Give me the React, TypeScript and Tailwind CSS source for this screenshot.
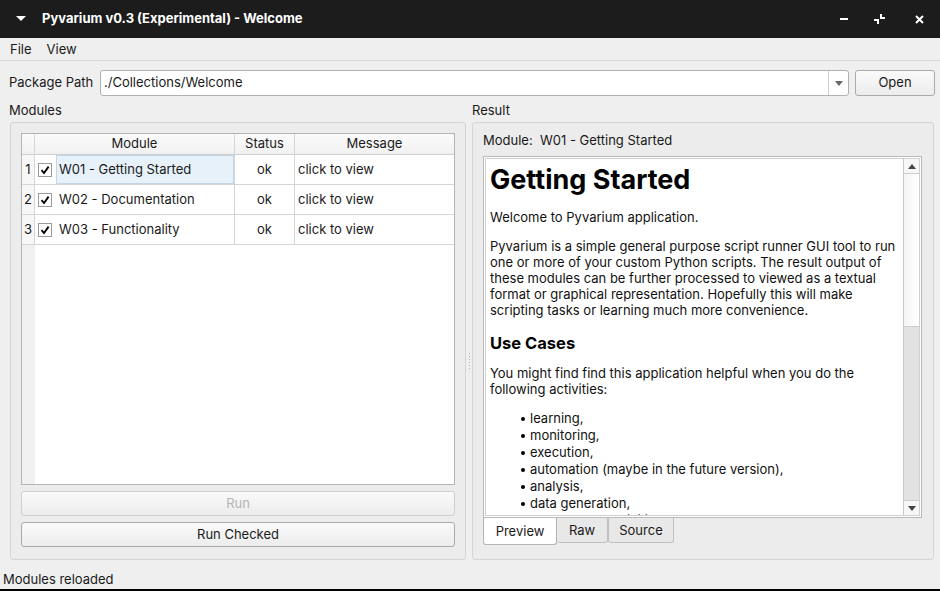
import React from 'react';

const rows = [
  { n: 1, name: 'W01 - Getting Started', status: 'ok', msg: 'click to view', current: true },
  { n: 2, name: 'W02 - Documentation', status: 'ok', msg: 'click to view', current: false },
  { n: 3, name: 'W03 - Functionality', status: 'ok', msg: 'click to view', current: false },
];

const uses = [
  'learning,',
  'monitoring,',
  'execution,',
  'automation (maybe in the future version),',
  'analysis,',
  'data generation,',
  'or any other activities.',
];

function Check() {
  return (
    <div className="w-[14px] h-[14px] bg-white border border-[#9a9a9a] flex items-center justify-center">
      <svg width="10" height="10" viewBox="0 0 10 10">
        <path d="M1.5 5.2 L4 8 L8.6 1.6" stroke="#000" strokeWidth="1.8" fill="none" />
      </svg>
    </div>
  );
}

function TitleBar() {
  return (
    <div className="h-[38px] bg-[#1c1c1c] flex items-center text-white shrink-0">
      <div className="w-[42px] flex justify-center">
        <svg width="10" height="6" viewBox="0 0 10 6">
          <path d="M0 0 H10 L5 5 Z" fill="#fff" />
        </svg>
      </div>
      <div className="text-[13px] font-bold flex-1">Pyvarium v0.3 (Experimental) - Welcome</div>
      <div className="flex items-center">
        <div className="w-[36px] flex justify-center">
          <div className="w-[8px] h-[2px] bg-white"></div>
        </div>
        <div className="w-[36px] flex justify-center">
          <svg width="14" height="14" viewBox="0 0 14 14">
            <path d="M8 2 V6 H12" stroke="#fff" strokeWidth="2" fill="none" />
            <path d="M1 8 H5 V12" stroke="#fff" strokeWidth="2" fill="none" />
          </svg>
        </div>
        <div className="w-[42px] flex justify-center">
          <svg width="9" height="9" viewBox="0 0 9 9">
            <path d="M1 1 L8 8 M8 1 L1 8" stroke="#fff" strokeWidth="2" />
          </svg>
        </div>
      </div>
    </div>
  );
}

function ModulesTable() {
  return (
    <div className="flex-1 bg-white border border-[#b4b4b4] flex flex-col text-[13px] text-[#1a1a1a]">
      <div className="h-[21px] flex border-b border-[#cfcfcf] bg-gradient-to-b from-[#fbfbfb] to-[#f1f1f1] shrink-0">
        <div className="w-[13px] border-r border-[#d6d6d6]"></div>
        <div className="w-[200px] border-r border-[#d6d6d6] flex items-center justify-center">Module</div>
        <div className="w-[60px] border-r border-[#d6d6d6] flex items-center justify-center">Status</div>
        <div className="flex-1 flex items-center justify-center">Message</div>
      </div>
      <div className="flex flex-1">
        <div className="w-[13px] bg-[#f0f0f0] flex flex-col">
          {rows.map((r) => (
            <div key={r.n} className="h-[30px] border-b border-r border-[#d6d6d6] flex items-center justify-center bg-[#f7f7f7]">
              {r.n}
            </div>
          ))}
        </div>
        <div className="flex-1 flex flex-col">
          {rows.map((r) => (
            <div key={r.n} className="h-[30px] flex border-b border-[#d6d6d6]">
              <div className="w-[200px] border-r border-[#d6d6d6] flex items-center pl-[3px]">
                <Check />
                <div
                  className={
                    r.current
                      ? 'ml-[4px] flex-1 h-full flex items-center pl-[2px] bg-[#e6f1fa] border border-[#c4d7e8]'
                      : 'ml-[4px] flex-1 h-full flex items-center pl-[3px]'
                  }
                >
                  {r.name}
                </div>
              </div>
              <div className="w-[60px] border-r border-[#d6d6d6] flex items-center justify-center">{r.status}</div>
              <div className="flex-1 flex items-center pl-[3px]">{r.msg}</div>
            </div>
          ))}
        </div>
      </div>
    </div>
  );
}

function Btn({ children, disabled }: { children: React.ReactNode; disabled?: boolean }) {
  return (
    <div
      className={
        'h-[25px] rounded-[3px] border flex items-center justify-center text-[13px] bg-gradient-to-b from-[#fafafa] to-[#ececec] ' +
        (disabled ? 'border-[#cfcfcf] text-[#b4b4b4]' : 'border-[#aaaaaa] text-[#1a1a1a]')
      }
    >
      {children}
    </div>
  );
}

function ScrollBar() {
  return (
    <div className="w-[16px] border-l border-[#c8c8c8] flex flex-col bg-[#e2e2e2]">
      <div className="h-[15px] bg-[#f7f7f7] border-b border-[#cdcdcd] flex items-center justify-center">
        <svg width="8" height="5" viewBox="0 0 8 5">
          <path d="M0 5 L4 0 L8 5 Z" fill="#444" />
        </svg>
      </div>
      <div className="h-[153px] bg-gradient-to-r from-[#f4f4f4] to-[#ffffff] border-b border-[#cdcdcd]"></div>
      <div className="flex-1"></div>
      <div className="h-[15px] bg-[#f7f7f7] border-t border-[#cdcdcd] flex items-center justify-center">
        <svg width="8" height="5" viewBox="0 0 8 5">
          <path d="M0 0 L8 0 L4 5 Z" fill="#444" />
        </svg>
      </div>
    </div>
  );
}

function Preview() {
  return (
    <div className="flex-1 min-h-0 bg-white border border-[#b9b9b9] p-px">
      <div className="h-full border border-[#d0d0d0] flex">
        <div className="flex-1 overflow-hidden pl-[4px] text-[13px] leading-[16px] text-[#111]">
          <h1 className="text-[27px] leading-[32px] font-bold mt-[5px] mb-[13px] text-black">Getting Started</h1>
          <p className="mb-[13px]">Welcome to Pyvarium application.</p>
          <p className="mb-[14px]">
            Pyvarium is a simple general purpose script runner GUI tool to run one or more of your custom Python
            scripts. The result output of these modules can be further processed to viewed as a textual format or
            graphical representation. Hopefully this will make scripting tasks or learning much more convenience.
          </p>
          <h2 className="text-[16.5px] leading-[22px] font-bold mb-[11px] text-black">Use Cases</h2>
          <p className="mb-[13px]">
            You might find find this application helpful when you do the following activities:
          </p>
          <ul className="pl-[31px] leading-[17px]">
            {uses.map((u) => (
              <li key={u} className="flex items-center">
                <span className="w-[4px] h-[4px] rounded-full bg-black mr-[5px]"></span>
                {u}
              </li>
            ))}
          </ul>
        </div>
        <ScrollBar />
      </div>
    </div>
  );
}

function Tabs() {
  return (
    <div className="flex text-[13px] text-[#1a1a1a] shrink-0">
      <div className="w-[74px] h-[27px] bg-white border border-t-0 border-[#b4b4b4] rounded-b-[3px] flex items-center justify-center pt-[2px]">
        Preview
      </div>
      <div className="w-[51px] h-[25px] bg-[#e8e8e8] border border-t-0 border-l-0 border-[#c0c0c0] rounded-b-[3px] flex items-center justify-center pt-[2px]">
        Raw
      </div>
      <div className="w-[66px] h-[25px] bg-[#e8e8e8] border border-t-0 border-[#c0c0c0] rounded-b-[3px] flex items-center justify-center pt-[2px]">
        Source
      </div>
    </div>
  );
}

export default function App() {
  return (
    <div className="w-[940px] h-[591px] bg-[#efefef] flex flex-col font-['Inter',sans-serif] text-[13px] text-[#1a1a1a] overflow-hidden">
      <TitleBar />
      <div className="h-[23px] flex items-center gap-[15px] px-[10px] pt-[1px] border-b border-[#d9d9d9] shrink-0">
        <span>File</span>
        <span>View</span>
      </div>
      <div className="flex items-center mt-[9px] h-[26px] pl-[9px] pr-[5px] shrink-0">
        <span className="w-[91px]">Package Path</span>
        <div className="flex-1 h-[26px] bg-white border border-[#b0b0b0] rounded-[3px] flex">
          <div className="flex-1 flex items-center pl-[3px]">./Collections/Welcome</div>
          <div className="w-[20px] border-l border-[#cfcfcf] flex items-center justify-center">
            <svg width="8" height="5" viewBox="0 0 8 5">
              <path d="M0 0 L8 0 L4 5 Z" fill="#666" />
            </svg>
          </div>
        </div>
        <div className="w-[80px] h-[26px] ml-[6px] rounded-[3px] border border-[#aaaaaa] bg-gradient-to-b from-[#fafafa] to-[#ececec] flex items-center justify-center">
          Open
        </div>
      </div>
      <div className="flex flex-1 min-h-0 pr-[6px] mt-[5px]">
        <div className="w-[466px] pl-[9px] flex flex-col">
          <div className="h-[19px] flex items-center">Modules</div>
          <div className="ml-px flex-1 min-h-0 mt-[2px] border border-[#d4d4d4] rounded-[3px] bg-[#ececec] pt-[10px] px-[10px] pb-[12px] flex flex-col">
            <ModulesTable />
            <div className="mt-[6px]">
              <Btn disabled>Run</Btn>
            </div>
            <div className="mt-[6px]">
              <Btn>Run Checked</Btn>
            </div>
          </div>
        </div>
        <div className="w-[6px] flex items-center justify-center">
          <div className="flex flex-col gap-[2px] mt-[60px]">
            {[0, 1, 2, 3, 4, 5].map((i) => (
              <div key={i} className="w-px h-px bg-[#b0b0b0]"></div>
            ))}
          </div>
        </div>
        <div className="flex-1 flex flex-col">
          <div className="h-[19px] flex items-center">Result</div>
          <div className="flex-1 min-h-0 mt-[2px] border border-[#d4d4d4] rounded-[3px] bg-[#ececec] pt-[9px] pl-[10px] pr-[11px] pb-[14px] flex flex-col">
            <div className="h-[18px] flex items-center mb-[6px] whitespace-pre shrink-0">Module:  W01 - Getting Started</div>
            <Preview />
            <Tabs />
          </div>
        </div>
      </div>
      <div className="h-[29px] flex items-end pl-[3px] shrink-0">Modules reloaded</div>
      <div className="h-[2px] bg-black shrink-0"></div>
    </div>
  );
}
